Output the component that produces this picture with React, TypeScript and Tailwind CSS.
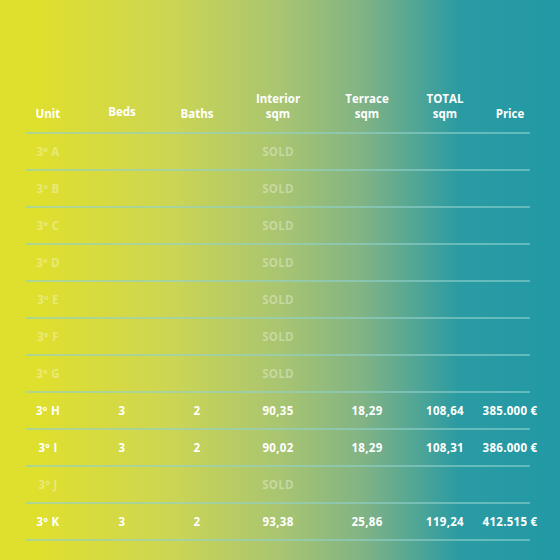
import React from 'react';

type Row = {
    unit: string;
    beds?: string;
    baths?: string;
    interior?: string;
    terrace?: string;
    total?: string;
    price?: string;
};

const rows: Row[] = [
    { unit: '3º A' },
    { unit: '3º B' },
    { unit: '3º C' },
    { unit: '3º D' },
    { unit: '3º E' },
    { unit: '3º F' },
    { unit: '3º G' },
    { unit: '3º H', beds: '3', baths: '2', interior: '90,35', terrace: '18,29', total: '108,64', price: '385.000 €' },
    { unit: '3º I', beds: '3', baths: '2', interior: '90,02', terrace: '18,29', total: '108,31', price: '386.000 €' },
    { unit: '3º J' },
    { unit: '3º K', beds: '3', baths: '2', interior: '93,38', terrace: '25,86', total: '119,24', price: '412.515 €' },
];

const grid = 'grid grid-cols-[44px_104px_46px_116px_62px_94px_36px]';
const cell = 'flex justify-center whitespace-nowrap';

const Header: React.FC = () => (
    <div className={`${grid} items-end pb-[11px] text-[11.5px] leading-[15px] border-b-2 border-[#8fd0cc]/60`}>
        <div className={cell}>Unit</div>
        <div className={`${cell} mb-[2px]`}>Beds</div>
        <div className={cell}>Baths</div>
        <div className={`${cell} flex-col items-center`}><span>Interior</span><span>sqm</span></div>
        <div className={`${cell} flex-col items-center`}><span>Terrace</span><span>sqm</span></div>
        <div className={`${cell} flex-col items-center`}><span>TOTAL</span><span>sqm</span></div>
        <div className={cell}>Price</div>
    </div>
);

const TableRow: React.FC<{ row: Row }> = ({ row }) => {
    const sold = !row.price;
    return (
        <div className={`${grid} h-[37px] items-center text-[11.5px] tracking-[0.3px] border-b-2 border-[#8fd0cc]/60 ${sold ? 'text-white/35' : 'text-white'}`}>
            <div className={cell}>{row.unit}</div>
            <div className={cell}>{row.beds}</div>
            <div className={cell}>{row.baths}</div>
            <div className={cell}>{sold ? 'SOLD' : row.interior}</div>
            <div className={cell}>{row.terrace}</div>
            <div className={cell}>{row.total}</div>
            <div className={cell}>{row.price}</div>
        </div>
    );
};

export default function App() {
    return (
        <div
            className="w-[560px] h-[560px] overflow-hidden bg-[linear-gradient(90deg,#dfdf2e_7%,#cdd653_30%,#a9c571_50%,#80b385_65%,#2a9ba3_82%,#2299a5_100%)] text-white font-bold"
            style={{ fontFamily: '"Open Sans", "Liberation Sans", sans-serif' }}
        >
            <div className="pt-[91px] pl-[26px] w-[530px]">
                <Header />
                {rows.map(r => (
                    <TableRow key={r.unit} row={r} />
                ))}
            </div>
        </div>
    );
}
